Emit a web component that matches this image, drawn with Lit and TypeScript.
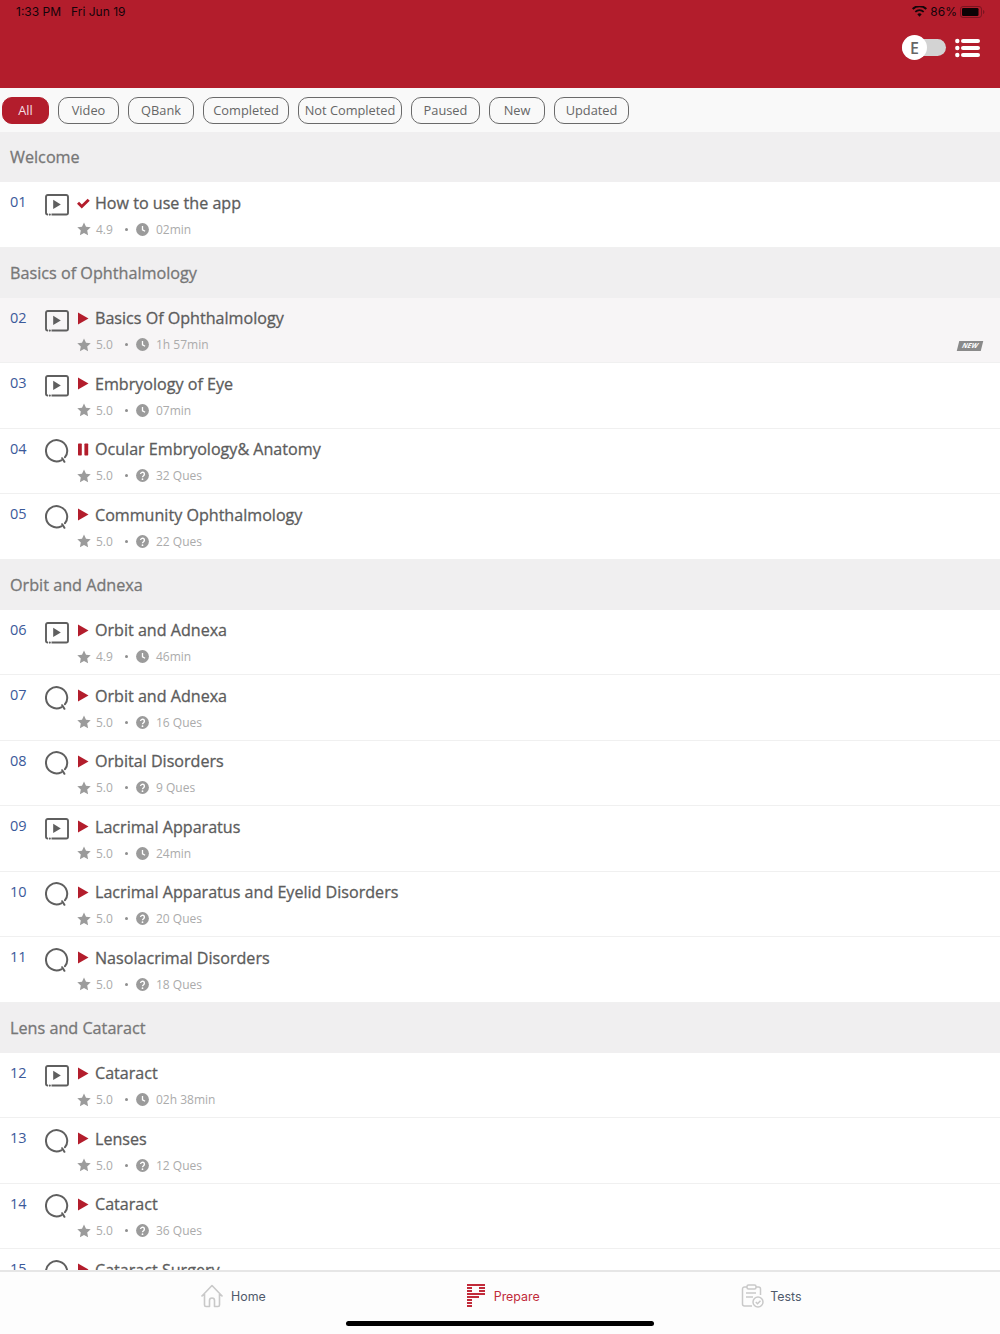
import { LitElement, html, css, svg } from "lit";
import { customElement } from "lit/decorators.js";

type Row = { n: string; kind: "v" | "q"; st: "check" | "play" | "pause"; title: string; rate: string; meta: string; isNew?: boolean; hl?: boolean };
type Section = { name: string; rows: Row[] };

const r = (n: string, kind: "v" | "q", title: string, rate: string, meta: string, st: Row["st"] = "play", extra: Partial<Row> = {}): Row => ({ n, kind, st, title, rate, meta, ...extra });

const sections: Section[] = [
  { name: "Welcome", rows: [r("01", "v", "How to use the app", "4.9", "02min", "check")] },
  { name: "Basics of Ophthalmology", rows: [
    r("02", "v", "Basics Of Ophthalmology", "5.0", "1h 57min", "play", { isNew: true, hl: true }),
    r("03", "v", "Embryology of Eye", "5.0", "07min"),
    r("04", "q", "Ocular Embryology& Anatomy", "5.0", "32 Ques", "pause"),
    r("05", "q", "Community Ophthalmology", "5.0", "22 Ques"),
  ] },
  { name: "Orbit and Adnexa", rows: [
    r("06", "v", "Orbit and Adnexa", "4.9", "46min"),
    r("07", "q", "Orbit and Adnexa", "5.0", "16 Ques"),
    r("08", "q", "Orbital Disorders", "5.0", "9 Ques"),
    r("09", "v", "Lacrimal Apparatus", "5.0", "24min"),
    r("10", "q", "Lacrimal Apparatus and Eyelid Disorders", "5.0", "20 Ques"),
    r("11", "q", "Nasolacrimal Disorders", "5.0", "18 Ques"),
  ] },
  { name: "Lens and Cataract", rows: [
    r("12", "v", "Cataract", "5.0", "02h 38min"),
    r("13", "q", "Lenses", "5.0", "12 Ques"),
    r("14", "q", "Cataract", "5.0", "36 Ques"),
    r("15", "q", "Cataract Surgery", "5.0", "24 Ques"),
  ] },
];

const filters: [string, number][] = [["All", 47], ["Video", 61], ["QBank", 66], ["Completed", 86], ["Not Completed", 104], ["Paused", 69], ["New", 56], ["Updated", 75]];

const videoIcon = html`<svg class="kind" width="24" height="22" viewBox="0 0 24 22">
  <path d="M3 20.500H2.800A1.800 1.800 0 0 1 1 18.700V2.800A1.800 1.800 0 0 1 2.800 1h18.400A1.800 1.800 0 0 1 23 2.800v15.900a1.800 1.800 0 0 1-1.800 1.800H6.500" fill="none" stroke="#5f5f5f" stroke-width="1.900"/>
  <circle cx="4.800" cy="20.600" r="1.100" fill="#5f5f5f"/>
  <path d="M8.200 5.800v9.200l7.600-4.600z" fill="#5f5f5f"/></svg>`;
const quizIcon = html`<svg class="kind quiz" width="24" height="24" viewBox="0 0 24 24">
  <path d="M16.200 21.300A10.600 10.600 0 1 1 20 18.200M17.200 19.200l2.200 3.600" fill="none" stroke="#5f5f5f" stroke-width="2" stroke-linecap="round"/></svg>`;
const statusIcon = (s: Row["st"]) => {
  if (s === "check") return html`<svg class="st" width="13" height="13" viewBox="0 0 13 13"><path d="M1 6.700l3.800 3.800L11.700 3.700" fill="none" stroke="#b31d2c" stroke-width="3"/></svg>`;
  if (s === "pause") return html`<svg class="st" width="13" height="13" viewBox="0 0 13 13"><rect x="1" y="0.500" width="3.800" height="12" rx=".7" fill="#b31d2c"/><rect x="7.400" y="0.500" width="3.800" height="12" rx=".7" fill="#b31d2c"/></svg>`;
  return html`<svg class="st" width="13" height="13" viewBox="0 0 13 13"><path d="M1 .5v12l10.500-6z" fill="#b31d2c"/></svg>`;
};
const star = svg`<path d="M7 .4l2 4.300 4.700.6-3.500 3.200.9 4.700L7 10.900l-4.100 2.300.9-4.700L.3 5.300 5 4.700z" fill="#9b9b9b"/>`;
const clock = svg`<circle cx="6.500" cy="6.500" r="6.400" fill="#9b9b9b"/><path d="M6.500 3v3.800l2.600 1.500" fill="none" stroke="#fff" stroke-width="1.300"/>`;
const ques = svg`<circle cx="6.500" cy="6.500" r="6.400" fill="#9b9b9b"/><path d="M4.600 5.100a1.900 1.900 0 1 1 3 1.600c-.7.5-1.100.8-1.100 1.600" fill="none" stroke="#fff" stroke-width="1.400"/><circle cx="6.500" cy="10.200" r=".9" fill="#fff"/>`;

@customElement("app-root")
export class AppRoot extends LitElement {
  static styles = css`
    :host { display: flex; flex-direction: column; width: 1000px; height: 1334px; overflow: hidden; font-family: "Open Sans", sans-serif; background: #fff; }
    .header { height: 88px; flex: none; background: #b31d2c; display: flex; flex-direction: column; }
    .status { height: 23px; display: flex; align-items: center; padding: 0 15px 0 16px; font-family: Inter, "Liberation Sans", sans-serif; font-size: 12px; color: #14040a; }
    .status .date { margin-left: 10px; }
    .status .right { margin-left: auto; display: flex; align-items: center; gap: 3px; }
    .controls { display: flex; justify-content: flex-end; align-items: center; padding: 2px 20px 0 0; gap: 9px; height: 47px; box-sizing: border-box; }
    .toggle { position: relative; width: 44px; height: 17px; border-radius: 9px; background: #d3d3d3; }
    .knob { position: absolute; left: 0; top: -4px; width: 25px; height: 25px; border-radius: 50%; background: #fff; display: flex; align-items: center; justify-content: center; font-size: 16px; font-weight: 600; color: #666; }
    .filters { height: 44px; flex: none; background: #f9f9f9; display: flex; align-items: center; padding: 0 0 0 2px; gap: 9px; }
    .chip { height: 27px; box-sizing: border-box; border: 1px solid #6a6a6a; border-radius: 10px; display: flex; align-items: center; font-size: 12.8px; color: #666; justify-content: center; flex: none; }
    .chip.on { background: #b31d2c; border-color: #b31d2c; color: #f4dfe1; }
    .list { flex: 1; overflow: hidden; min-height: 0; }
    .sec { height: 50px; background: #f0eff0; display: flex; align-items: center; padding-left: 10px; font-size: 16.2px; color: #777; -webkit-text-stroke: 0.3px #777; box-sizing: border-box; }
    .row { height: 65.5px; box-sizing: border-box; border-bottom: 1px solid #f0f0f0; display: grid; grid-template-columns: 45px 32px 18px 1fr; grid-template-rows: 40px 1fr; position: relative; }
    .row.hl { background: #f7f5f6; }
    .num { padding: 10px 0 0 10px; font-size: 14.5px; line-height: 20px; color: #3b5a9a; }
    .kcell { padding-top: 12px; }
    .kind { display: block; }
    .kind.quiz { margin-top: -1.5px; }
    .scell { padding-top: 14px; }
    .st { display: block; }
    .title { padding-top: 7.5px; font-size: 16.1px; line-height: 26px; color: #5c5c5c; -webkit-text-stroke: 0.3px #5c5c5c; white-space: nowrap; }
    .meta { grid-column: 3 / 5; grid-row: 2; display: flex; align-items: center; font-size: 12px; color: #ababab; height: 14px; }
    .meta svg { display: block; flex: none; }
    .rate { width: 18px; margin-left: 5px; }
    .dot { width: 3px; height: 3px; border-radius: 50%; background: #8e8e8e; margin: 0 8px 0 11px; }
    .val { margin-left: 7px; }
    .new { position: absolute; right: 18px; top: 43px; width: 24px; height: 10px; background: #8a8a8a; transform: skewX(-14deg); color: #fff; font-size: 7px; font-weight: 700; font-style: italic; line-height: 10px; text-align: center; }
    .tabs { height: 64px; flex: none; background: #fdfdfd; border-top: 2px solid #e6e6e6; box-sizing: border-box; position: relative; display: flex; padding-left: 200px; gap: 201px; font-size: 12.4px; font-family: Inter, "Noto Sans", sans-serif; color: #4f5a6b; }
    .tab { display: flex; align-items: flex-start; gap: 7px; padding-top: 12px; line-height: 25px; }
    .tab svg { display: block; }
    .tab.on { color: #c12b3a; }
    .tab.tight { gap: 5.5px; }
    .bar { position: absolute; left: 346px; bottom: 8px; width: 308px; height: 5px; border-radius: 3px; background: #000; }
  `;

  render() {
    return html`
      <div class="header">
        <div class="status">
          <span>1:33 PM</span><span class="date">Fri Jun 19</span>
          <span class="right">
            <svg width="15" height="11" viewBox="0 0 15 11"><path d="M7.500 10.800L5.300 8.200a3.300 3.300 0 0 1 4.400 0zM3.900 6.600L2.700 5.200a7.200 7.200 0 0 1 9.600 0l-1.200 1.400a5.400 5.400 0 0 0-7.200 0zM1.400 3.700L0 2.200a11 11 0 0 1 15 0l-1.400 1.500a9 9 0 0 0-12.200 0z" fill="#12060a"/></svg>
            <span>86%</span>
            <svg width="25" height="12" viewBox="0 0 25 12"><rect x=".5" y=".5" width="21" height="11" rx="2.600" fill="none" stroke="#7a1420"/><rect x="2" y="2" width="16.500" height="8" rx="1.300" fill="#0b0305"/><path d="M23 4v4c.8-.2 1.400-1 1.400-2s-.6-1.800-1.400-2z" fill="#7a1420"/></svg>
          </span>
        </div>
        <div class="controls">
          <div class="toggle"><div class="knob">E</div></div>
          <svg width="25" height="20" viewBox="0 0 25 20" fill="#fff">
            <circle cx="2.300" cy="3" r="2.200"/><circle cx="2.300" cy="10" r="2.200"/><circle cx="2.300" cy="17" r="2.200"/>
            <rect x="6" y="1" width="19" height="4" rx="2"/><rect x="6" y="8" width="19" height="4" rx="2"/><rect x="6" y="15" width="19" height="4" rx="2"/>
          </svg>
        </div>
      </div>
      <div class="filters">
        ${filters.map(([f, w], i) => html`<div class="chip ${i === 0 ? "on" : ""}" style="width:${w}px">${f}</div>`)}
      </div>
      <div class="list">
        ${sections.map((s) => html`
          <div class="sec">${s.name}</div>
          ${s.rows.map((x) => html`
            <div class="row ${x.hl ? "hl" : ""}">
              <div class="num">${x.n}</div>
              <div class="kcell">${x.kind === "v" ? videoIcon : quizIcon}</div>
              <div class="scell">${statusIcon(x.st)}</div>
              <div class="title">${x.title}</div>
              <div class="meta">
                <svg width="14" height="14" viewBox="0 0 14 14">${star}</svg>
                <span class="rate">${x.rate}</span>
                <span class="dot"></span>
                <svg width="13" height="13" viewBox="0 0 13 13">${x.kind === "v" ? clock : ques}</svg>
                <span class="val">${x.meta}</span>
              </div>
              ${x.isNew ? html`<div class="new">NEW</div>` : ""}
            </div>`)}
        `)}
      </div>
      <div class="tabs">
        <div class="tab">
          <svg width="24" height="24" viewBox="0 0 24 24" fill="none" stroke="#c9c9c9" stroke-width="1.600" stroke-linejoin="round"><path d="M1.500 12.500L12 1.500l10.500 11M4.500 10v11a1.500 1.500 0 0 0 1.500 1.500h3.500v-6a2.500 2.500 0 0 1 5 0v6H18a1.500 1.500 0 0 0 1.500-1.500V10"/></svg>
          <span>Home</span>
        </div>
        <div class="tab on">
          <svg width="20" height="23" viewBox="0 0 20 23" fill="#c12b3a">
            <rect x="0" y="0" width="18" height="2"/><rect x="0" y="3" width="5" height="2"/><rect x="12" y="3" width="6" height="2"/><rect x="0" y="6" width="5" height="2"/><rect x="12" y="6" width="6" height="2"/><rect x="0" y="9" width="18" height="2"/><rect x="0" y="12" width="12" height="2"/><rect x="0" y="15" width="5" height="2"/><rect x="0" y="18" width="5" height="2"/><rect x="0" y="21" width="5" height="2"/>
          </svg>
          <span>Prepare</span>
        </div>
        <div class="tab tight">
          <svg width="24" height="24" viewBox="0 0 24 24" fill="none" stroke="#c9c9c9" stroke-width="1.500"><path d="M6 3H3.500A2 2 0 0 0 1.500 5v15a2 2 0 0 0 2 2H11M15 3h2.500a2 2 0 0 1 2 2v6"/><rect x="6" y="1" width="9" height="4" rx="1.500"/><path d="M5 9h10M5 13h7"/><circle cx="17" cy="18" r="5"/><path d="M14.800 18l1.700 1.700 3-3"/></svg>
          <span>Tests</span>
        </div>
        <div class="bar"></div>
      </div>
    `;
  }
}
